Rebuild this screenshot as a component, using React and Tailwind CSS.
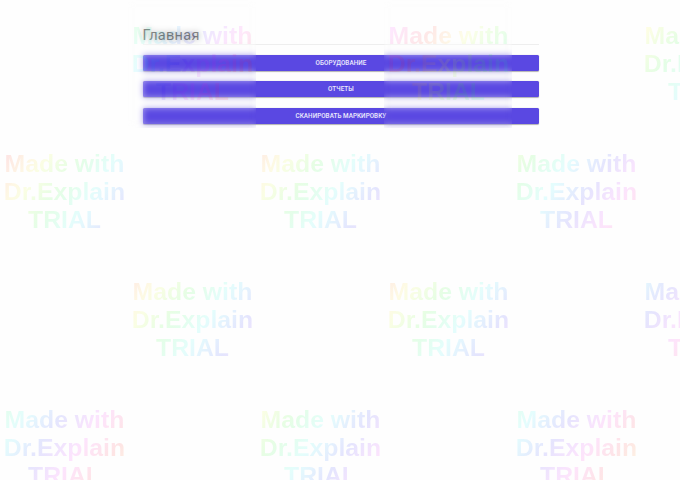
const BUTTONS = ["ОБОРУДОВАНИЕ", "ОТЧЕТЫ", "СКАНИРОВАТЬ МАРКИРОВКУ"];

// Watermark stamps: tile origin, hue at the first letter, frosted backdrop.
const STAMPS = [
  { x: 128, y: 0, hue: 140, frosted: true },
  { x: 384, y: 0, hue: 300, frosted: true },
  { x: 640, y: 0, hue: 60 },
  { x: 0, y: 128, hue: 5 },
  { x: 256, y: 128, hue: 28 },
  { x: 512, y: 128, hue: 98 },
  { x: 128, y: 256, hue: 28 },
  { x: 384, y: 256, hue: 30 },
  { x: 640, y: 256, hue: 204 },
  { x: 0, y: 384, hue: 150 },
  { x: 256, y: 384, hue: 70 },
  { x: 512, y: 384, hue: 160 },
];

function rainbow(hue, alpha) {
  const stops = [];
  for (let i = 0; i <= 16; i++) {
    const h = (hue - 42 + i * 21 + 360) % 360;
    stops.push(`hsl(${h} 100% 50% / ${alpha})`);
  }
  return `linear-gradient(124deg, ${stops.join(", ")})`;
}

function Stamp({ x, y, hue, frosted }) {
  return (
    <div className="absolute size-32" style={{ left: x, top: y }}>
      {frosted && <div className="absolute inset-0 opacity-50 backdrop-blur-[3px]" />}
      <div
        className="relative size-32 bg-clip-text pt-[22px] pl-[1px] text-center font-['Liberation_Sans',Arial,sans-serif] text-[24.8px] leading-[28.2px] font-bold whitespace-nowrap text-transparent"
        style={{ backgroundImage: rainbow(hue, frosted ? 0.09 : 0.1) }}
      >
        <div>Made with</div>
        <div>Dr.Explain</div>
        <div>TRIAL</div>
      </div>
    </div>
  );
}

export default function App() {
  return (
    <div className="relative h-[480px] w-[680px] overflow-hidden bg-[#fefefe] font-[Roboto,sans-serif]">
      <main className="ml-[142.5px] w-[396.9px] pt-[25px]">
        <h1 className="h-[20px] border-b border-[#eeeeee] text-[14.5px] leading-[21px] tracking-[0.3px] text-[#333]">
          Главная
        </h1>
        <div className="flex flex-col gap-[10.2px] pt-[10.2px]">
          {BUTTONS.map((label) => (
            <button
              key={label}
              className="h-4 w-full rounded-[1.5px] bg-[#5a48e2] text-center text-[6.3px] leading-[16.5px] font-medium tracking-[0.06px] text-white/90 shadow-[0_0.5px_1px_rgba(0,0,0,0.3)]"
            >
              {label}
            </button>
          ))}
        </div>
      </main>
      <div className="pointer-events-none">
        {STAMPS.map((s) => (
          <Stamp key={`${s.x}-${s.y}`} {...s} />
        ))}
      </div>
    </div>
  );
}
